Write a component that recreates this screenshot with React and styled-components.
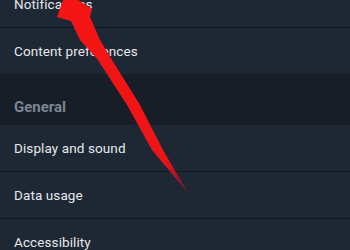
import React from 'react';
import styled, { createGlobalStyle } from 'styled-components';

const GlobalStyle = createGlobalStyle`
  html, body {
    margin: 0;
    padding: 0;
    background: #1d2834;
    overflow: hidden;
  }
  body {
    font-family: Roboto, "Noto Sans", sans-serif;
  }
`;

const Screen = styled.div`
  position: relative;
  width: 350px;
  height: 250px;
  overflow: hidden;
  background: #1d2834;
`;

// scrolled list: the first row sits partly above the viewport
const List = styled.div`
  display: flex;
  flex-direction: column;
  margin-top: -19px;
`;

const Row = styled.div`
  height: 46px;
  display: flex;
  align-items: center;
  padding-left: 14px;
  background: #1d2834;
  color: #e6e8eb;
  font-size: 13.5px;
  letter-spacing: 0.1px;
  border-bottom: ${(p) => (p.$divider ? '1px solid #0f161d' : 'none')};
`;

const SectionHeader = styled.div`
  height: 51px;
  box-sizing: border-box;
  display: flex;
  align-items: flex-end;
  padding: 0 0 9px 14px;
  background: #171e27;
  color: #7c8692;
  font-size: 15px;
  font-weight: 700;
`;

const Arrow = styled.svg`
  position: absolute;
  left: 0;
  top: 0;
  width: 350px;
  height: 250px;
  pointer-events: none;
`;

const sections = [
  { type: 'row', label: 'Notifications', divider: true },
  { type: 'row', label: 'Content preferences' },
  { type: 'header', label: 'General' },
  { type: 'row', label: 'Display and sound', divider: true },
  { type: 'row', label: 'Data usage', divider: true },
  { type: 'row', label: 'Accessibility' },
];

export default function App() {
  return (
    <>
      <GlobalStyle />
      <Screen>
        <List>
          {sections.map((s) =>
            s.type === 'header' ? (
              <SectionHeader key={s.label}>{s.label}</SectionHeader>
            ) : (
              <Row key={s.label} $divider={s.divider}>
                {s.label}
              </Row>
            )
          )}
        </List>
        <Arrow viewBox="0 0 350 250">
          <defs>
            <linearGradient
              id="arrowFill"
              gradientUnits="userSpaceOnUse"
              x1="66"
              y1="0"
              x2="188"
              y2="193"
            >
              <stop offset="0" stopColor="#f51414" />
              <stop offset="0.82" stopColor="#ee1416" />
              <stop offset="1" stopColor="#7a1232" />
            </linearGradient>
          </defs>
          <path
            d="M66 -8 L92 9 L90 17 L100 40 L112 60 L140 105 L163 150 L188 193 L152 150 L127 105 L98 60 L80 40 L71 21 L57 17 Z"
            fill="url(#arrowFill)"
          />
        </Arrow>
      </Screen>
    </>
  );
}
